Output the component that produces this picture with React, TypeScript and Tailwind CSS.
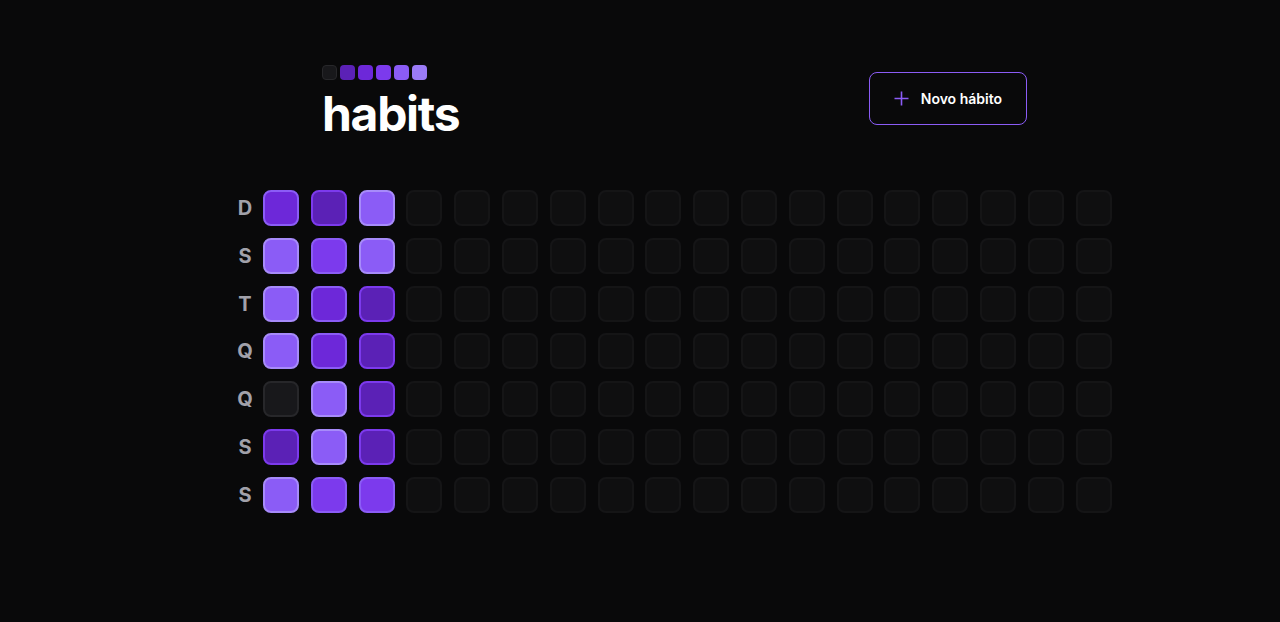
import { ReactNode } from "react";

const weekDays = ["D", "S", "T", "Q", "Q", "S", "S"];

// intensity level per day, column by column (0 = nothing done)
const weeks: number[][] = [
  [3, 5, 5, 5, 0, 2, 5],
  [2, 4, 3, 3, 5, 5, 4],
  [5, 5, 2, 2, 2, 2, 4],
];

const placeholderCount = 15 * 7;

const levelClass: Record<number, string> = {
  0: "bg-[#18181b] border-[#27272a]",
  1: "bg-[#4c1d95] border-[#6d28d9]",
  2: "bg-[#5b21b6] border-[#7c3aed]",
  3: "bg-[#6d28d9] border-[#8b5cf6]",
  4: "bg-[#7c3aed] border-[#8b5cf6]",
  5: "bg-[#8b5cf6] border-[#a78bfa]",
};

function Logo() {
  const colors = [
    "bg-[#18181b] border border-[#27272a]",
    "bg-[#5b21b6]",
    "bg-[#6d28d9]",
    "bg-[#7c3aed]",
    "bg-[#8b5cf6]",
    "bg-[#9b7bf7]",
  ];
  return (
    <div className="flex gap-[3px]">
      {colors.map((c, i) => (
        <div key={i} className={`w-[15px] h-[15px] rounded-[4px] ${c}`} />
      ))}
    </div>
  );
}

function Header() {
  return (
    <div className="ml-[95px] w-[705px] flex justify-between items-start">
      <div className="flex flex-col">
        <Logo />
        <h1 className="mt-[10px] text-[48px] leading-[48px] font-bold tracking-[-1.3px] text-white">
          habits
        </h1>
      </div>
      <button className="mt-[7px] h-[53px] border border-[#8b5cf6] rounded-lg px-6 flex items-center gap-3 text-sm font-semibold text-white">
        <svg width="15" height="15" viewBox="0 0 15 15" fill="none">
          <path d="M7.5 0.5v14M0.5 7.5h14" stroke="#8b5cf6" strokeWidth="1.6" />
        </svg>
        Novo hábito
      </button>
    </div>
  );
}

function Cell({ className }: { className: string }): ReactNode {
  return <div className={`w-9 h-9 border-2 rounded-lg ${className}`} />;
}

function SummaryTable() {
  return (
    <div className="flex">
      <div className="grid grid-rows-7 grid-flow-row gap-y-[11.8px]">
        {weekDays.map((d, i) => (
          <div
            key={i}
            className="w-9 h-9 flex items-center justify-center text-xl font-bold text-[#a1a1aa]"
          >
            {d}
          </div>
        ))}
      </div>
      <div className="grid grid-rows-7 grid-flow-col gap-[11.8px]">
        {weeks.flat().map((lvl, i) => (
          <Cell key={i} className={levelClass[lvl]} />
        ))}
        {Array.from({ length: placeholderCount }).map((_, i) => (
          <Cell key={`p${i}`} className="bg-[#18181b] border-[#27272a] opacity-40" />
        ))}
      </div>
    </div>
  );
}

export default function App() {
  return (
    <div
      className="w-full h-[622px] bg-[#09090a] pt-[65px]"
      style={{ fontFamily: "Inter, 'Noto Sans', sans-serif" }}
    >
      <div className="ml-[227px] flex flex-col gap-[52px]">
        <Header />
        <SummaryTable />
      </div>
    </div>
  );
}
